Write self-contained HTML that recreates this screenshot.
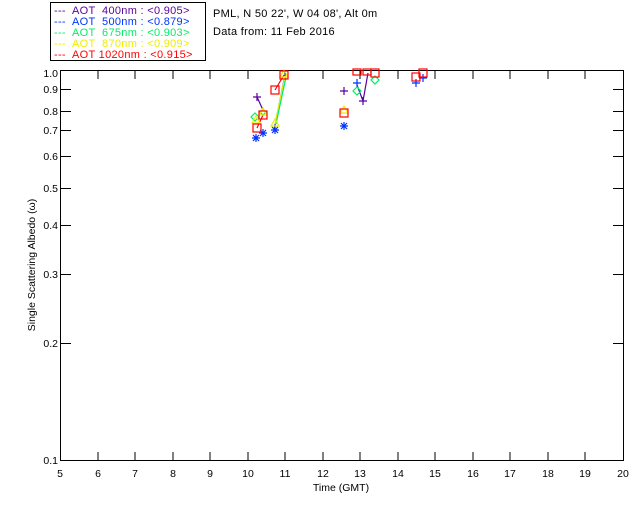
<!DOCTYPE html>
<html><head><style>
html,body{margin:0;padding:0;background:#fff;}
svg{display:block;font-family:"Liberation Sans","DejaVu Sans",sans-serif;}
text{white-space:pre;}
</style></head><body>
<svg width="640" height="512" viewBox="0 0 640 512" xmlns="http://www.w3.org/2000/svg">
<rect x="50.5" y="2.5" width="155" height="58" fill="none" stroke="#000"/>
<g font-size="11" letter-spacing="0.3">
<text x="54" y="14" fill="#5a00a0" xml:space="preserve">---  AOT  400nm : &lt;0.905&gt;</text>
<text x="54" y="25" fill="#0033ff" xml:space="preserve">---  AOT  500nm : &lt;0.879&gt;</text>
<text x="54" y="36" fill="#00ee66" xml:space="preserve">---  AOT  675nm : &lt;0.903&gt;</text>
<text x="54" y="47" fill="#eeee00" xml:space="preserve">---  AOT  870nm : &lt;0.909&gt;</text>
<text x="54" y="58" fill="#ff0000" xml:space="preserve">---  AOT 1020nm : &lt;0.915&gt;</text>
<text x="213" y="17" fill="#000">PML, N 50 22', W 04 08', Alt 0m</text>
<text x="213" y="35" fill="#000">Data from: 11 Feb 2016</text>
</g>
<g stroke="#000" stroke-width="1" fill="none">
<rect x="60.5" y="70.5" width="563" height="390"/>
<path d="M98 460v-8M135 460v-8M173 460v-8M210 460v-8M248 460v-8M285 460v-8M323 460v-8M360 460v-8M398 460v-8M435 460v-8M473 460v-8M510 460v-8M548 460v-8M585 460v-8
M98 71v8M135 71v8M173 71v8M210 71v8M248 71v8M285 71v8M323 71v8M360 71v8M398 71v8M435 71v8M473 71v8M510 71v8M548 71v8M585 71v8
M61 89.5h10M61 111.5h10M61 130.5h10M61 156.5h10M61 188.5h10M61 225.5h10M61 274.5h10M61 343.5h10
M623 89.5h-10M623 111.5h-10M623 130.5h-10M623 156.5h-10M623 188.5h-10M623 225.5h-10M623 274.5h-10M623 343.5h-10"/>
</g>
<g font-size="10.5" fill="#000" text-anchor="end">
<text x="58" y="77">1.0</text><text x="58" y="93">0.9</text><text x="58" y="115">0.8</text>
<text x="58" y="134">0.7</text><text x="58" y="160">0.6</text><text x="58" y="192">0.5</text>
<text x="58" y="229">0.4</text><text x="58" y="278">0.3</text><text x="58" y="347">0.2</text>
<text x="58" y="464">0.1</text>
</g>
<g font-size="10.5" fill="#000" text-anchor="middle">
<text x="60" y="477">5</text><text x="98" y="477">6</text><text x="135" y="477">7</text><text x="173" y="477">8</text>
<text x="210" y="477">9</text><text x="248" y="477">10</text><text x="285" y="477">11</text><text x="323" y="477">12</text>
<text x="360" y="477">13</text><text x="398" y="477">14</text><text x="435" y="477">15</text><text x="473" y="477">16</text>
<text x="510" y="477">17</text><text x="548" y="477">18</text><text x="585" y="477">19</text><text x="623" y="477">20</text>
<text x="341" y="491">Time (GMT)</text>
<text transform="translate(35,265) rotate(-90)">Single Scattering Albedo (ω)</text>
</g>
<g fill="none" stroke-width="1.2">
<path d="M257 97L263 110" stroke="#5a00a0"/>
<path d="M357 85L363 101L368 73" stroke="#5a00a0"/>
<path d="M274 130L284 80" stroke="#0033ff"/>
<path d="M275 124L285 76" stroke="#eeee00"/>
<path d="M276 124L286 77" stroke="#00ee66"/>
<path d="M257 128L263 115M275 90L284 75" stroke="#ff0000"/>
<g stroke="#5a00a0"><path d="M253 97h8M257 93v8M340 91h8M344 87v8M359 101h8M363 97v8"/></g>
<g stroke="#0033ff"><path d="M252 138h8M256 134v8M253 135l6 6M259 135l-6 6 M259 133h8M263 129v8M260 130l6 6M266 130l-6 6 M271 130h8M275 126v8M272 127l6 6M278 127l-6 6 M340 126h8M344 122v8M341 123l6 6M347 123l-6 6 M353 83h8M357 79v8M412 83h8M416 79v8M419 78h8M423 74v8"/></g>
<g stroke="#00ee66"><path d="M255 113l4 4-4 4-4-4zM357 87l4 4-4 4-4-4zM375 76l4 4-4 4-4-4zM263 109l3 3-3 3-3-3z"/></g>
<g stroke="#eeee00"><path d="M256 116l4 7h-8zM263 108l4 7h-8zM275 119l4 7h-8zM344 106l4 7h-8zM284 70l4 7h-8z"/></g>
<g stroke="#ff0000"><rect x="253" y="124" width="8" height="8"/><rect x="259" y="111" width="8" height="8"/><rect x="271" y="86" width="8" height="8"/><rect x="280" y="71" width="8" height="8"/><rect x="340" y="109" width="8" height="8"/><rect x="353" y="69" width="8" height="6"/><rect x="363" y="69" width="8" height="6"/><rect x="371" y="69" width="8" height="8"/><rect x="412" y="73" width="8" height="8"/><rect x="419" y="69" width="8" height="8"/></g>
</g>
</svg>
</body></html>
